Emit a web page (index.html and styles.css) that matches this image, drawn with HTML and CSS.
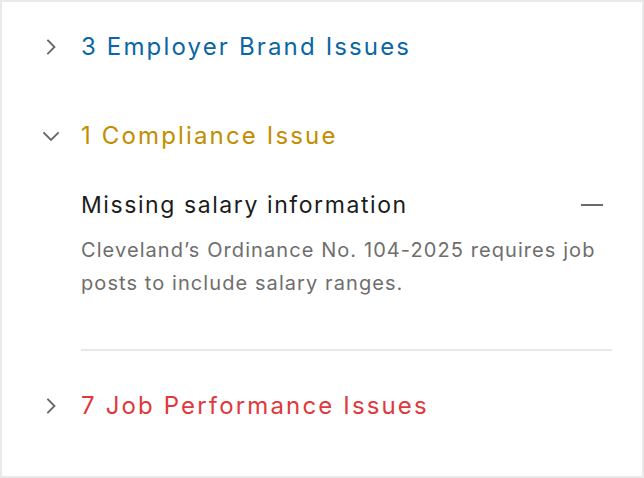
FILE: index.html
```html
<!DOCTYPE html>
<html lang="en">
<head>
<meta charset="utf-8">
<title>Issues</title>
<link rel="stylesheet" href="styles.css">
</head>
<body>
<div class="card">
  <div class="row row-brand">
    <svg class="chev" viewBox="0 0 20 20" width="20" height="20"><path d="M7 3.5 L13.5 10 L7 16.5"/></svg>
    <span class="label">3 Employer Brand Issues</span>
  </div>
  <div class="row row-compliance">
    <svg class="chev" viewBox="0 0 20 20" width="20" height="20"><path d="M3 7 L10 14 L17 7"/></svg>
    <span class="label">1 Compliance Issue</span>
  </div>
  <div class="details">
    <div class="item-head">
      <span class="item-title">Missing salary information</span>
      <svg class="minus" viewBox="0 0 22 4" width="22" height="4"><rect x="0" y="1" width="22" height="2"/></svg>
    </div>
    <p class="item-desc">Cleveland’s Ordinance No. 104-2025 requires job posts to include salary ranges.</p>
    <div class="divider"></div>
  </div>
  <div class="row row-performance">
    <svg class="chev" viewBox="0 0 20 20" width="20" height="20"><path d="M7 3.5 L13.5 10 L7 16.5"/></svg>
    <span class="label">7 Job Performance Issues</span>
  </div>
</div>
</body>
</html>
```
FILE: styles.css
```css
html, body {
  margin: 0;
  padding: 0;
  background: #ffffff;
}
.card {
  box-sizing: border-box;
  width: 644px;
  height: 478px;
  border: 2px solid #e9e9e9;
  background: #ffffff;
  padding: 29px 30px 0 39px;
  font-family: Inter, "Noto Sans", sans-serif;
}
.row {
  display: flex;
  align-items: center;
  gap: 20px;
  height: 32px;
}
.chev {
  flex: none;
  fill: none;
  stroke: #666666;
  stroke-width: 1.8;
  stroke-linecap: square;
}
.label {
  font-size: 24px;
  line-height: 32px;
  font-weight: 400;
  letter-spacing: 2.15px;
}
.row-brand .label { color: #0a66a5; }
.row-compliance { margin-top: 57px; }
.row-compliance .label { color: #c28e00; }
.row-performance { margin-top: 39px; }
.row-performance .label { color: #e0383c; }
.details {
  padding-left: 40px;
  margin-top: 38px;
}
.item-head {
  display: flex;
  align-items: center;
  justify-content: space-between;
  padding-right: 9px;
  height: 30px;
}
.item-title {
  font-size: 23px;
  line-height: 30px;
  letter-spacing: 1.58px;
  color: #1c1c1c;
}
.minus {
  fill: #6b6b6b;
}
.item-desc {
  margin: 14px 0 0;
  font-size: 20px;
  line-height: 33px;
  letter-spacing: 1.08px;
  color: #6e6e6e;
}
.divider {
  margin-top: 49px;
  height: 2px;
  background: #e8e8e8;
}
```
